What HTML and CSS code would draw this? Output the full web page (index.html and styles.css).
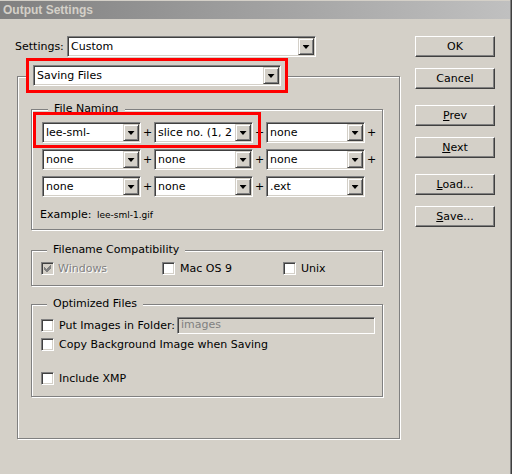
FILE: index.html
```html
<!DOCTYPE html>
<html lang="en">
<head>
    <meta charset="UTF-8">
    <title>Output Settings</title>
    <link rel="stylesheet" href="styles.css">
</head>
<body>

<div class="window">
    <div class="titlebar">Output Settings</div>

    <div class="main">
        <div class="left">
            <div class="settings-row">
                <span class="settings-label">Settings:</span>
                <div class="combo combo-settings"><span class="combo-value">Custom</span><span class="drop"></span></div>
            </div>

            <div class="panel">
                <div class="panel-head">
                    <div class="combo combo-panel"><span class="combo-value">Saving Files</span><span class="drop"></span></div>
                </div>

                <div class="group group-naming">
                    <div class="group-title">File Naming</div>
                    <div class="name-row">
                        <div class="combo combo-name"><span class="combo-value">lee-sml-</span><span class="drop"></span></div>
                        <span class="plus">+</span>
                        <div class="combo combo-name"><span class="combo-value">slice no. (1, 2</span><span class="drop"></span></div>
                        <span class="plus">+</span>
                        <div class="combo combo-name"><span class="combo-value">none</span><span class="drop"></span></div>
                        <span class="plus">+</span>
                    </div>
                    <div class="name-row">
                        <div class="combo combo-name"><span class="combo-value">none</span><span class="drop"></span></div>
                        <span class="plus">+</span>
                        <div class="combo combo-name"><span class="combo-value">none</span><span class="drop"></span></div>
                        <span class="plus">+</span>
                        <div class="combo combo-name"><span class="combo-value">none</span><span class="drop"></span></div>
                        <span class="plus">+</span>
                    </div>
                    <div class="name-row">
                        <div class="combo combo-name"><span class="combo-value">none</span><span class="drop"></span></div>
                        <span class="plus">+</span>
                        <div class="combo combo-name"><span class="combo-value">none</span><span class="drop"></span></div>
                        <span class="plus">+</span>
                        <div class="combo combo-name"><span class="combo-value">.ext</span><span class="drop"></span></div>
                    </div>
                    <div class="example">Example: <span class="example-file">lee-sml-1.gif</span></div>
                </div>

                <div class="group group-compat">
                    <div class="group-title">Filename Compatibility</div>
                    <div class="compat-row">
                        <label class="opt opt-compat disabled">
                            <span class="check check-disabled">
                                <svg width="7" height="7" viewBox="0 0 7 7" shape-rendering="crispEdges"><path d="M0 2L2 4L6 0H7V3L3 7H2L0 5Z" fill="#808080"/></svg>
                            </span>
                            Windows
                        </label>
                        <label class="opt opt-compat"><span class="check"></span>Mac OS 9</label>
                        <label class="opt opt-compat"><span class="check"></span>Unix</label>
                    </div>
                </div>

                <div class="group group-opt">
                    <div class="group-title">Optimized Files</div>
                    <div class="opt-row opt-row-folder">
                        <label class="opt"><span class="check"></span>Put Images in Folder:</label>
                        <div class="field-disabled">images</div>
                    </div>
                    <div class="opt-row opt-row-copy">
                        <label class="opt"><span class="check"></span>Copy Background Image when Saving</label>
                    </div>
                    <div class="opt-row opt-row-xmp">
                        <label class="opt"><span class="check"></span>Include XMP</label>
                    </div>
                </div>
            </div>
        </div>

        <div class="buttons">
            <button class="btn">OK</button>
            <button class="btn btn-gap">Cancel</button>
            <button class="btn btn-group"><u>P</u>rev</button>
            <button class="btn btn-gap"><u>N</u>ext</button>
            <button class="btn btn-group"><u>L</u>oad...</button>
            <button class="btn btn-gap"><u>S</u>ave...</button>
        </div>
    </div>

    <div class="mark mark-saving"></div>
    <div class="mark mark-naming"></div>
</div>

</body>
</html>
```

FILE: styles.css
```css
body {
    margin: 0;
    background: #d4d0c8;
    font-family: "DejaVu Sans", Verdana, sans-serif;
    font-size: 11px;
    color: #000;
}
.window {
    position: relative;
    width: 512px;
    height: 474px;
    padding-top: 1px;
    box-sizing: border-box;
    background: #d4d0c8;
    box-shadow: inset -1px 0 #404040, inset -2px 0 #808080;
    overflow: hidden;
}
.titlebar {
    height: 18px;
    margin-right: 2px;
    padding-left: 3px;
    line-height: 18px;
    background: linear-gradient(to right, #808080, #c0c0c0);
    color: #d4d0c8;
    font-family: "Liberation Sans", Arial, sans-serif;
    font-weight: bold;
    font-size: 12px;
}
.main {
    display: flex;
}
.left {
    width: 385px;
    padding: 17px 0 0 15px;
}

/* combo boxes */
.combo {
    display: flex;
    height: 21px;
    box-sizing: border-box;
    padding: 1px;
    border: 1px solid;
    border-color: #808080 #fff #fff #808080;
    box-shadow: inset 1px 1px #404040, inset -1px -1px #d4d0c8;
    background: #fff;
}
.combo-value {
    flex: 1;
    padding-left: 2px;
    line-height: 17px;
    white-space: nowrap;
    overflow: hidden;
}
.drop {
    width: 16px;
    box-sizing: border-box;
    display: flex;
    align-items: center;
    justify-content: center;
    border: 1px solid;
    border-color: #d4d0c8 #404040 #404040 #d4d0c8;
    box-shadow: inset 1px 1px #fff, inset -1px -1px #808080;
    background: #d4d0c8;
}
.drop::after {
    content: "";
    width: 7px;
    height: 4px;
    margin-top: 1px;
    background: #000;
    clip-path: polygon(0 0, 100% 0, 50% 100%);
}

.settings-row {
    display: flex;
    align-items: center;
}
.settings-label {
    width: 52px;
}
.combo-settings {
    width: 249px;
}

/* main panel */
.panel {
    width: 383px;
    box-sizing: border-box;
    margin: 19px 0 0 2px;
    padding: 0 15px 41px 13px;
    border: 1px solid #808080;
    box-shadow: inset 1px 1px #fff, 1px 1px #fff;
}
.panel-head {
    display: flex;
    width: 248px;
    margin: -12px 0 0 -2px;
    padding: 0 4px;
    background: #d4d0c8;
}
.combo-panel {
    width: 248px;
}

/* group boxes */
.group {
    box-sizing: border-box;
    width: 352px;
    border: 1px solid #808080;
    box-shadow: inset 1px 1px #fff, 1px 1px #fff;
    padding: 0 0 0 9px;
}
.group-title {
    display: table;
    margin: -8px 0 0 6px;
    padding: 0 6px;
    line-height: 14px;
    background: #d4d0c8;
}
.group-naming {
    margin-top: 23px;
    padding: 0 0 7px 10px;
}
.name-row {
    display: flex;
    align-items: center;
    margin-top: 6px;
}
.name-row:first-of-type {
    margin-top: 5px;
}
.combo-name {
    width: 99px;
}
.plus {
    width: 13px;
    text-align: center;
}
.example {
    margin: 11px 0 0 -2px;
    line-height: 14px;
}
.example-file {
    margin-left: 2px;
    font-size: 9px;
}

/* check boxes */
.opt {
    display: flex;
    align-items: center;
    gap: 5px;
    line-height: 13px;
    white-space: nowrap;
}
.check {
    display: flex;
    align-items: center;
    justify-content: center;
    width: 13px;
    height: 13px;
    flex: none;
    box-sizing: border-box;
    border: 1px solid;
    border-color: #808080 #fff #fff #808080;
    box-shadow: inset 1px 1px #404040, inset -1px -1px #d4d0c8;
    background: #fff;
}
.check-disabled {
    background: #d4d0c8;
}
.disabled {
    color: #808080;
    text-shadow: 1px 1px #fff;
}

.group-compat {
    margin-top: 20px;
    padding-bottom: 10px;
}
.compat-row {
    display: flex;
    margin-top: 5px;
}
.opt-compat {
    flex: none;
    width: 121px;
}
.opt-compat:first-child {
    gap: 4px;
}

.group-opt {
    margin-top: 18px;
    padding-bottom: 11px;
}
.opt-row {
    display: flex;
    align-items: center;
}
.opt-row-folder {
    margin-top: 6px;
    padding-right: 7px;
}
.opt-row-copy {
    margin-top: 4px;
}
.opt-row-xmp {
    margin-top: 21px;
}
.field-disabled {
    width: 198px;
    height: 17px;
    box-sizing: border-box;
    margin-left: auto;
    padding-left: 3px;
    line-height: 14px;
    border: 1px solid;
    border-color: #808080 #fff #fff #808080;
    box-shadow: inset 1px 1px #404040, inset -1px -1px #d4d0c8;
    background: #d4d0c8;
    color: #808080;
}

/* command buttons */
.buttons {
    display: flex;
    flex-direction: column;
    margin-left: 15px;
    padding-top: 17px;
}
.btn {
    width: 80px;
    height: 21px;
    box-sizing: border-box;
    padding: 0;
    border: 1px solid;
    border-color: #fff #404040 #404040 #fff;
    box-shadow: inset -1px -1px #808080;
    background: #d4d0c8;
    font-family: inherit;
    font-size: 11px;
    color: #000;
}
.btn-gap {
    margin-top: 11px;
}
.btn-group {
    margin-top: 16px;
}

/* red highlight marks drawn over the dialog */
.mark {
    position: absolute;
    border: 3px solid #f00;
    box-sizing: border-box;
}
.mark-saving {
    left: 26px;
    top: 58px;
    width: 262px;
    height: 35px;
}
.mark-naming {
    left: 33px;
    top: 112px;
    width: 228px;
    height: 36px;
}
```
